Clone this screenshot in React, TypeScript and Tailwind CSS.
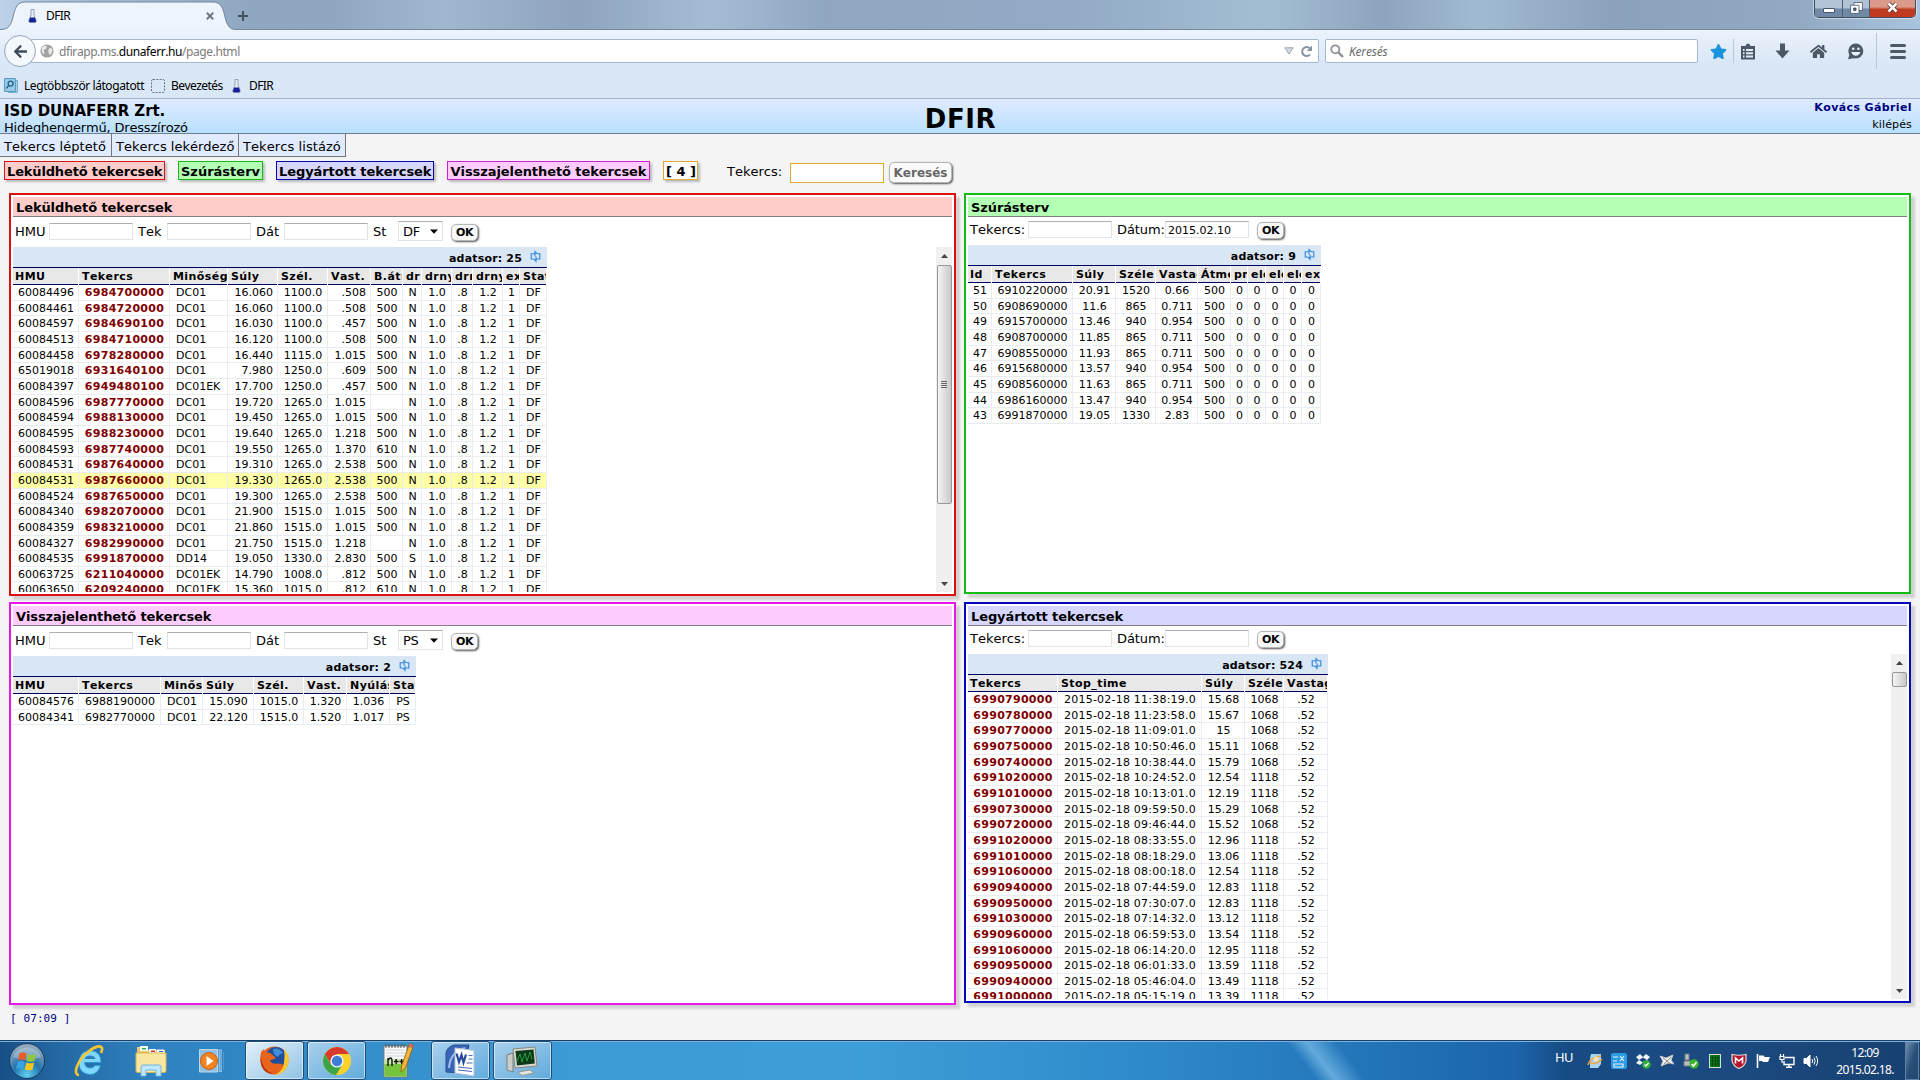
import type { ReactNode } from "react";
import { FaArrowLeft, FaStar, FaHome } from "react-icons/fa";

type Align = "left" | "right" | "center";
type Col = { t: string; w: string; a?: Align; bold?: boolean };

const hmuCols: Col[] = [
  { t: "HMU", w: "w-[66px]", a: "center" },
  { t: "Tekercs", w: "w-[91px]", a: "center", bold: true },
  { t: "Minőség", w: "w-[58px]", a: "left" },
  { t: "Súly", w: "w-[50px]", a: "right" },
  { t: "Szél.", w: "w-[50px]", a: "center" },
  { t: "Vast.", w: "w-[43px]", a: "right" },
  { t: "B.átm", w: "w-[32px]", a: "center" },
  { t: "dr", w: "w-[19px]", a: "center" },
  { t: "drny", w: "w-[30px]", a: "center" },
  { t: "drn", w: "w-[21px]", a: "center" },
  { t: "drny", w: "w-[30px]", a: "center" },
  { t: "ex", w: "w-[17px]", a: "center" },
  { t: "Stat", w: "w-[27px]", a: "center" },
];

const hmuRows = `60084496,6984700000,DC01,16.060,1100.0,.508,500,N
60084461,6984720000,DC01,16.060,1100.0,.508,500,N
60084597,6984690100,DC01,16.030,1100.0,.457,500,N
60084513,6984710000,DC01,16.120,1100.0,.508,500,N
60084458,6978280000,DC01,16.440,1115.0,1.015,500,N
65019018,6931640100,DC01,7.980,1250.0,.609,500,N
60084397,6949480100,DC01EK,17.700,1250.0,.457,500,N
60084596,6987770000,DC01,19.720,1265.0,1.015,,N
60084594,6988130000,DC01,19.450,1265.0,1.015,500,N
60084595,6988230000,DC01,19.640,1265.0,1.218,500,N
60084593,6987740000,DC01,19.550,1265.0,1.370,610,N
60084531,6987640000,DC01,19.310,1265.0,2.538,500,N
60084531,6987660000,DC01,19.330,1265.0,2.538,500,N
60084524,6987650000,DC01,19.300,1265.0,2.538,500,N
60084340,6982070000,DC01,21.900,1515.0,1.015,500,N
60084359,6983210000,DC01,21.860,1515.0,1.015,500,N
60084327,6982990000,DC01,21.750,1515.0,1.218,,N
60084535,6991870000,DD14,19.050,1330.0,2.830,500,S
60063725,6211040000,DC01EK,14.790,1008.0,.812,500,N
60063650,6209240000,DC01EK,15.360,1015.0,.812,610,N`
  .split("\n")
  .map((r) => [...r.split(","), "1.0", ".8", "1.2", "1", "DF"]);

const backCols: Col[] = [
  { t: "HMU", w: "w-[66px]" },
  { t: "Tekercs", w: "w-[82px]" },
  { t: "Minőség", w: "w-[42px]" },
  { t: "Súly", w: "w-[51px]" },
  { t: "Szél.", w: "w-[50px]" },
  { t: "Vast.", w: "w-[43px]" },
  { t: "Nyúlás", w: "w-[43px]" },
  { t: "Stat", w: "w-[26px]" },
];
const backRows = [
  ["60084576", "6988190000", "DC01", "15.090", "1015.0", "1.320", "1.036", "PS"],
  ["60084341", "6982770000", "DC01", "22.120", "1515.0", "1.520", "1.017", "PS"],
];

const planCols: Col[] = [
  { t: "Id", w: "w-[24px]" },
  { t: "Tekercs", w: "w-[81px]" },
  { t: "Súly", w: "w-[43px]" },
  { t: "Széle", w: "w-[40px]" },
  { t: "Vastag", w: "w-[42px]" },
  { t: "Átmé", w: "w-[33px]" },
  { t: "pr", w: "w-[17px]" },
  { t: "elő", w: "w-[18px]" },
  { t: "elő", w: "w-[18px]" },
  { t: "elő", w: "w-[18px]" },
  { t: "ex", w: "w-[19px]" },
];
const planRows = `51,6910220000,20.91,1520,0.66
50,6908690000,11.6,865,0.711
49,6915700000,13.46,940,0.954
48,6908700000,11.85,865,0.711
47,6908550000,11.93,865,0.711
46,6915680000,13.57,940,0.954
45,6908560000,11.63,865,0.711
44,6986160000,13.47,940,0.954
43,6991870000,19.05,1330,2.83`
  .split("\n")
  .map((r) => [...r.split(","), "500", "0", "0", "0", "0", "0"]);

const doneCols: Col[] = [
  { t: "Tekercs", w: "w-[90px]", bold: true },
  { t: "Stop_time", w: "w-[144px]" },
  { t: "Súly", w: "w-[43px]" },
  { t: "Széle", w: "w-[39px]" },
  { t: "Vastag", w: "w-[44px]" },
];
const doneRows = `6990790000,11:38:19,15.68,1068
6990780000,11:23:58,15.67,1068
6990770000,11:09:01,15,1068
6990750000,10:50:46,15.11,1068
6990740000,10:38:44,15.79,1068
6991020000,10:24:52,12.54,1118
6991010000,10:13:01,12.19,1118
6990730000,09:59:50,15.29,1068
6990720000,09:46:44,15.52,1068
6991020000,08:33:55,12.96,1118
6991010000,08:18:29,13.06,1118
6991060000,08:00:18,12.54,1118
6990940000,07:44:59,12.83,1118
6990950000,07:30:07,12.83,1118
6991030000,07:14:32,13.12,1118
6990960000,06:59:53,13.54,1118
6991060000,06:14:20,12.95,1118
6990950000,06:01:33,13.59,1118
6990940000,05:46:04,13.49,1118
6991000000,05:15:19,13.39,1118`
  .split("\n")
  .map((r) => {
    const [coil, time, weight, width] = r.split(",");
    return [coil, `2015-02-18 ${time}.0`, weight, width, ".52"];
  });

const alignClass: Record<Align, string> = {
  left: "text-left pl-[6px]",
  right: "text-right pr-[4px]",
  center: "text-center pl-px",
};

function RefreshIcon() {
  return (
    <svg width="11" height="13" viewBox="0 0 11 13" fill="none" stroke="#2f86e0" strokeWidth="1.1">
      <path d="M3.500 9H1.200V3.800H5.500M5 0.800V6.500M5 2L7.500 3.800" />
      <path d="M7.500 3.800H9.800V9H5.500M6 6.500V12.200M6 10.800L3.500 9" />
    </svg>
  );
}

function DataTable({ cols, rows, count, selected }: { cols: Col[]; rows: string[][]; count: number; selected?: number }) {
  return (
    <div className="w-max shrink-0 text-[11px]">
      <div className="flex h-[21px] items-center justify-end gap-2 border-b border-[#000060] bg-[#d9e6f4] pr-[6px]">
        <span className="pt-[3px] font-bold tracking-[0.18px]">adatsor: {count}</span>
        <span className="-mt-[2px]">
          <RefreshIcon />
        </span>
      </div>
      <div className="flex h-[17px] bg-[#e8e8e8]">
        {cols.map((c, i) => (
          <div key={i} className={`h-[17px] border-r border-white ${c.w}`}>
            <div
              className={`h-[17px] overflow-hidden whitespace-nowrap border-b border-[#000060] font-bold leading-[17px] tracking-[0.42px] ${
                i === 0 ? "pl-[2px]" : "pl-[3px]"
              }`}
            >
              {c.t}
            </div>
          </div>
        ))}
      </div>
      {rows.map((r, ri) => (
        <div key={ri} className={`flex h-[15.66px] ${ri === selected ? "bg-[#ffffa8]" : ""}`}>
          {cols.map((c, i) => (
            <div
              key={i}
              className={`h-full whitespace-nowrap border-r border-b border-[#e9edf1] leading-[16px] ${c.w} ${alignClass[c.a ?? "center"]} ${
                c.bold ? "font-bold text-[#800000] tracking-[0.28px]" : r[i].length > 12 ? "tracking-[0.22px]" : ""
              }`}
            >
              {r[i]}
            </div>
          ))}
        </div>
      ))}
    </div>
  );
}

function Field({ value }: { value?: string }) {
  return <div className="h-[17px] w-[84px] border border-[#dfe3ea] border-t-[#abadb3] bg-white pl-[2px] text-[11px] leading-[17px]">{value}</div>;
}

function OkButton() {
  return (
    <div className="mt-[2px] ml-[8px] h-[17px] w-[27px] rounded-[5px] border border-[#b5b5b5] bg-[#f7f7f7] text-center text-[11px] font-bold leading-[16px] tracking-[-0.4px] shadow-[1px_1px_2px_#555]">
      OK
    </div>
  );
}

function CoilFilter({ status }: { status: string }) {
  return (
    <div className="flex h-[30px] items-center pl-[2px] pb-[2px]">
      <span className="w-[34px]">HMU</span>
      <Field />
      <span className="w-[34px] pl-[5px]">Tek</span>
      <Field />
      <span className="w-[33px] pl-[5px]">Dát</span>
      <Field />
      <span className="w-[30px] pl-[5px]">St</span>
      <div className="flex h-[20px] w-[45px] items-center justify-between border border-[#dfe3ea] border-t-[#abadb3] bg-white pr-[4px] pl-[4px] text-[13px] tracking-[-0.3px]">
        {status}
        <svg width="8" height="5" viewBox="0 0 8 5">
          <path d="M0 0.500H8L4 4.800Z" fill="#000" />
        </svg>
      </div>
      <OkButton />
    </div>
  );
}

function DateFilter({ date, pad }: { date?: string; pad: string }) {
  return (
    <div className={`flex h-[28px] items-center pl-[2px] ${pad}`}>
      <span className="w-[58px]">Tekercs:</span>
      <Field />
      <span className="w-[53px] pl-[5px] tracking-[-0.1px]">Dátum:</span>
      <Field value={date} />
      <OkButton />
    </div>
  );
}

function Scrollbar({ thumb, grip }: { thumb: string; grip?: boolean }) {
  return (
    <div className="flex w-[16px] flex-col items-center bg-[#f0f0f0]">
      <div className="flex h-[18px] items-center">
        <svg width="7" height="4" viewBox="0 0 7 4">
          <path d="M0 4L3.500 0 7 4Z" fill="#444" />
        </svg>
      </div>
      <div className={`flex w-[15px] items-center justify-center rounded-[2px] border border-[#979797] bg-gradient-to-r from-[#f5f5f5] to-[#c8c8cc] ${thumb}`}>
        {grip && (
          <div className="flex flex-col gap-px">
            <i className="h-px w-[6px] bg-[#666]" />
            <i className="h-px w-[6px] bg-[#666]" />
            <i className="h-px w-[6px] bg-[#666]" />
            <i className="h-px w-[6px] bg-[#666]" />
          </div>
        )}
      </div>
      <div className="mt-auto flex h-[17px] items-center">
        <svg width="7" height="4" viewBox="0 0 7 4">
          <path d="M0 0L3.500 4 7 0Z" fill="#444" />
        </svg>
      </div>
    </div>
  );
}

function Panel({ title, frame, head, filter, children, scroll }: { title: string; frame: string; head: string; filter: ReactNode; children: ReactNode; scroll?: ReactNode }) {
  return (
    <section className={`flex w-[947px] flex-col border-2 bg-white p-[2px] shadow-[4px_4px_2px_rgba(0,0,0,0.14)] ${frame}`}>
      <h2 className={`h-[20px] shrink-0 border-b border-[#808080] pl-[3px] text-[13px] font-bold leading-[21px] tracking-[-0.1px] ${head}`}>{title}</h2>
      {filter}
      <div className="flex min-h-0 flex-1 justify-between overflow-hidden">
        {children}
        {scroll}
      </div>
    </section>
  );
}

function Flask() {
  return (
    <svg className="shrink-0" width="9" height="14" viewBox="0 0 9 14">
      <path d="M3 0.500H6V6L8.300 11.500Q8.600 13.500 7 13.500H2Q0.400 13.500 0.700 11.500L3 6Z" fill="#e8eef6" stroke="#8c99ad" strokeWidth="0.9" />
      <path d="M2.200 8.500H6.800L8 11.800Q8.200 13.200 7 13.200H2Q0.800 13.200 1 11.800Z" fill="#16209c" />
    </svg>
  );
}

function BrowserChrome() {
  return (
    <div className="h-[99px] shrink-0 border-b border-[#a3b2c4] bg-gradient-to-b from-[#ebf3fc] from-30% to-[#d9e7f6] to-65% font-['Noto_Sans',sans-serif] text-[12px]">
      <div className="flex h-[30px] justify-between border-b border-[#77889b] bg-[linear-gradient(90deg,#bcd3ea_0%,#a9bfd8_3%,#90a7c2_13%,#8fa6c1_17%,#9fb8cf_23%,#8fa4be_30%,#a4bdd4_37%,#90a6c1_43%,#93abc6_56%,#a3bed3_66%,#8ea4be_72%,#a0bbd1_77%,#8ba1bc_84%,#93aac3_94%,#a9c4e0_100%)]">
        <div className="flex">
          <div className="relative h-[30px] w-[236px]">
            <svg className="absolute inset-0" width="236" height="30" viewBox="0 0 236 30">
              <path d="M0 29.500C9 29.500 11 25 13 17C15 8 17 2 25 2H213C221 2 223 8 225 17C227 25 229 29.500 236 29.500V30H0Z" fill="#edf4fc" />
              <path d="M0 29.500C9 29.500 11 25 13 17C15 8 17 2 25 2H213C221 2 223 8 225 17C227 25 229 29.500 236 29.500" fill="none" stroke="#74869b" />
            </svg>
            <div className="relative flex h-[32px] items-center pl-[28px]">
              <Flask />
              <span className="pl-[9px] tracking-[-0.6px]">DFIR</span>
              <svg className="mr-[22px] ml-auto" width="8" height="8" viewBox="0 0 8 8" stroke="#6d7884" strokeWidth="2">
                <path d="M0.800 0.800L7.200 7.200M7.200 0.800L0.800 7.200" />
              </svg>
            </div>
          </div>
          <svg className="mt-[11px] ml-[2px]" width="10" height="10" viewBox="0 0 10 10" stroke="#45525f" strokeWidth="2">
            <path d="M5 0V10M0 5H10" />
          </svg>
        </div>
        <div className="mr-[4px] flex h-[18px] w-[102px] overflow-hidden rounded-b-[5px] border border-t-0 border-[#3f4e61] shadow-[0_0_1px_1px_rgba(255,255,255,0.5)]">
          <div className="flex w-[28px] items-end justify-center border-r border-[#4e5f73] bg-gradient-to-b from-[#b3c3d6] from-45% to-[#7089a6] to-55% pb-[4px]">
            <div className="h-[5px] w-[12px] rounded-[1px] border border-[#44546a] bg-white" />
          </div>
          <div className="flex w-[27px] items-center justify-center border-r border-[#4e5f73] bg-gradient-to-b from-[#b3c3d6] from-45% to-[#7089a6] to-55% pb-[2px]">
            <svg width="13" height="12" viewBox="0 0 13 12" fill="#fff" stroke="#44546a" strokeWidth="0.8">
              <path d="M4 0.500H12.400V8.500H4Z" />
              <path d="M0.600 3.200H9V11.400H0.600Z" />
              <path d="M3.600 6H6V8.600H3.600Z" fill="#44546a" />
            </svg>
          </div>
          <div className="flex flex-1 items-center justify-center bg-gradient-to-b from-[#dc9a8b] from-40% to-[#bf3a20] to-55% pb-[2px]">
            <svg width="13" height="11" viewBox="0 0 13 11" fill="none">
              <path d="M2.500 1.500L10.500 9.500M10.500 1.500L2.500 9.500" stroke="#5a3030" strokeWidth="4" />
              <path d="M2.500 1.500L10.500 9.500M10.500 1.500L2.500 9.500" stroke="#fff" strokeWidth="2.5" />
            </svg>
          </div>
        </div>
      </div>

      <div className="flex h-[42px] items-center">
        <div className="z-10 ml-[4px] flex size-[32px] items-center justify-center rounded-full border border-[#97a6b8] bg-[#f3f8fd] text-[#3d4a58]">
          <FaArrowLeft size={15} />
        </div>
        <div className="-ml-[5px] flex h-[24px] w-[1288px] items-center rounded-r-[2px] border border-[#a5b8cd] bg-white pl-[8px]">
          <svg width="14" height="14" viewBox="0 0 14 14">
            <circle cx="7" cy="7" r="6.600" fill="#a2a2a2" />
            <path d="M2 3.500Q4 1 7 2L6 5 3.500 6 4.500 8.500 3.500 10.500Q1 8 2 3.500ZM8.500 5L11 3.500 12.500 6 11.500 9.500 9.500 11 8.500 8.500Z" fill="#e9e9e9" />
          </svg>
          <span className="pt-[2px] pl-[5px] tracking-[-0.42px] text-[#7b7b7b]">
            dfirapp.ms.<span className="text-black">dunaferr.hu</span>/page.html
          </span>
          <svg className="mr-[6px] ml-auto" width="10" height="8" viewBox="0 0 10 8" fill="#d6dbe1" stroke="#9aa5b0">
            <path d="M0.800 0.800H9.200L5 7Z" />
          </svg>
          <svg className="mr-[5px]" width="13" height="13" viewBox="0 0 13 13" fill="none" stroke="#8793a0" strokeWidth="2">
            <path d="M10 9.600A4.500 4.500 0 1 1 10 3.600" />
            <path d="M12 0.500V6H6.800Z" fill="#8793a0" stroke="none" />
          </svg>
        </div>
        <div className="ml-[6px] flex h-[24px] w-[373px] items-center rounded-[2px] border border-[#a5b8cd] bg-white pl-[4px]">
          <svg width="14" height="14" viewBox="0 0 14 14" fill="none" stroke="#8b929a">
            <circle cx="5.300" cy="5.300" r="4" strokeWidth="1.800" />
            <path d="M8.300 8.300L13 13" strokeWidth="2.400" />
          </svg>
          <span className="pt-[2px] pl-[5px] italic tracking-[-0.2px] text-[#6b6b6b]">Keresés</span>
        </div>
        <div className="ml-[12px] flex flex-1 items-center text-[#4d5967]">
          <FaStar size={17} color="#1b93dd" />
          <i className="mx-[6px] h-[24px] w-px bg-[#b9c7d6]" />
          <svg width="16" height="17" viewBox="0 0 16 17" fill="currentColor">
            <path fillRule="evenodd" d="M1 3H5.500Q6 0.500 8 0.500T10.500 3H15V16.500H1ZM3 6V8H4.500V6ZM6 6V8H13V6ZM3 9.300V11.200H4.500V9.300ZM6 9.300V11.200H13V9.300ZM3 12.600V14.500H4.500V12.600ZM6 12.600V14.500H13V12.600Z" />
          </svg>
          <svg className="ml-[19px]" width="15" height="16" viewBox="0 0 15 16" fill="currentColor">
            <path d="M5 0.500H10V7.500H14.500L7.500 15.500 0.500 7.500H5Z" />
          </svg>
          <FaHome className="ml-[20px]" size={17} />
          <svg className="ml-[20px]" width="17" height="17" viewBox="0 0 17 17">
            <circle cx="8.800" cy="8" r="7.500" fill="currentColor" />
            <path d="M1 16.200L3 10 8 15Z" fill="currentColor" />
            <circle cx="6.200" cy="5.800" r="1.300" fill="#e6eff9" />
            <circle cx="11.400" cy="5.800" r="1.300" fill="#e6eff9" />
            <path d="M4.200 9H13.400Q12 12.800 8.800 12.800T4.200 9Z" fill="#e6eff9" />
          </svg>
          <i className="ml-[12px] h-[36px] w-px bg-[#b9c7d6]" />
          <div className="ml-[13px] flex flex-col gap-[3px]">
            <i className="h-[3px] w-[16px] rounded-sm bg-[#4d5967]" />
            <i className="h-[3px] w-[16px] rounded-sm bg-[#4d5967]" />
            <i className="h-[3px] w-[16px] rounded-sm bg-[#4d5967]" />
          </div>
        </div>
      </div>

      <div className="flex h-[27px] items-center pl-[4px]">
        <svg className="shrink-0" width="14" height="15" viewBox="0 0 14 15">
          <path d="M10 2.500H13.300V14.300H4" fill="#bfe0f2" stroke="#5aa2c8" />
          <path d="M0.600 0.600H11.400V13.400H0.600Z" fill="#9ccbe6" stroke="#4d97c0" />
          <circle cx="6.600" cy="5.600" r="2.500" fill="none" stroke="#1c5f8c" strokeWidth="1.300" />
          <path d="M4.800 7.400L2.400 10.400" stroke="#1c5f8c" strokeWidth="1.500" />
        </svg>
        <span className="w-[127px] pl-[6px] whitespace-nowrap tracking-[-0.42px]">Legtöbbször látogatott</span>
        <svg className="ml-[6px]" width="14" height="14" viewBox="0 0 14 14">
          <rect x="0.500" y="0.500" width="13" height="13" rx="1.500" fill="none" stroke="#66727f" strokeDasharray="2 1.300" />
        </svg>
        <span className="w-[67px] pl-[6px] whitespace-nowrap tracking-[-0.55px]">Bevezetés</span>
        <Flask />
        <span className="pl-[8px] tracking-[-0.6px]">DFIR</span>
      </div>
    </div>
  );
}

function NavTag({ children, skin }: { children: ReactNode; skin: string }) {
  return (
    <span className={`h-[19px] border px-[2px] text-center font-bold leading-[19px] whitespace-nowrap shadow-[2px_2px_2px_#bbb] ${skin}`}>{children}</span>
  );
}

function TaskButton({ children, active }: { children: ReactNode; active?: boolean }) {
  return (
    <div
      className={`flex h-[39px] w-[59px] items-center justify-center rounded-[3px] border border-[#1f4f78] shadow-[inset_0_0_0_1px_rgba(255,255,255,0.55)] ${
        active ? "bg-gradient-to-br from-[#e4f0f9] to-[#8fc3e6]" : "bg-gradient-to-br from-[#a9d0ec] to-[#5fabdd]"
      }`}
    >
      {children}
    </div>
  );
}

function Taskbar() {
  return (
    <div className="flex h-[40px] shrink-0 items-center border-t border-[#17406a] bg-[linear-gradient(52deg,transparent_67.500%,rgba(150,210,245,0.55)_68.500%,transparent_70%),linear-gradient(90deg,#184f87_0%,#2468a3_3%,#2f82bf_8%,#3088c6_14%,#3c9bd4_30%,#3d9dd6_45%,#3391d0_55%,#2a82c5_64%,#2273b8_72%,#1c64ab_79%,#174b83_81.500%,#1c4a80_90%,#17406f_100%)] shadow-[inset_0_1px_0_#7fb2d8] font-['Noto_Sans',sans-serif] text-white">
      <svg className="ml-[8px]" width="38" height="38" viewBox="0 0 38 38">
        <defs>
          <radialGradient id="orb" cx="50%" cy="90%" r="80%">
            <stop offset="0" stopColor="#5fd0f2" />
            <stop offset="0.5" stopColor="#2474ae" />
            <stop offset="1" stopColor="#8fa8bd" />
          </radialGradient>
        </defs>
        <circle cx="19" cy="19" r="17.500" fill="url(#orb)" stroke="#16395b" />
        <path d="M5 15A14.500 13 0 0 1 33 15Q19 21 5 15Z" fill="#fff" opacity="0.25" />
        <path d="M11.500 11.500Q15 9.500 18.500 11.500L17 18.500Q13.500 16.500 10 18.300Z" fill="#ef5a23" />
        <path d="M20 12Q24 13.800 28 12L26.500 19Q22.500 20.500 18.700 18.900Z" fill="#8fc93a" />
        <path d="M9.600 20Q13 18.200 16.700 20L15 27Q11.500 25.200 8 27Z" fill="#38a4e8" />
        <path d="M18.300 20.500Q22 22.200 26.200 20.500L24.500 27.500Q20.500 29.200 16.800 27.500Z" fill="#fcc81d" />
      </svg>
      <svg className="ml-[27px]" width="32" height="32" viewBox="0 0 32 32" fill="none">
        <path d="M28 17.500H11.500Q12 23 17.500 23Q20.500 23 22 20.500H27.500Q25 29.500 17 29.500Q6 29 6 17.500Q6.500 6 17 5.500Q28 6 28 17.500Z" fill="#7fd8fb" stroke="#2a9ad8" />
        <path d="M11.800 14H22.500Q21.800 10.500 17 10.500T11.800 14Z" fill="#2c7fb9" />
        <path d="M6 30C-1 30 5 14 15 7C22 1 28 0 29 3Q29.500 5 28 8" stroke="#f7c62f" strokeWidth="2.600" />
      </svg>
      <svg className="ml-[29px]" width="34" height="32" viewBox="0 0 34 32">
        <path d="M3 5V2H12L14 5H31V27H3Z" fill="#e8c766" />
        <path d="M6 1H14V6H6ZM15 4H22V8H15ZM23 4.500H30V8H23Z" fill="#f6fbff" />
        <path d="M8 3H12V4.500H8Z" fill="#3ba55d" />
        <path d="M17 5.500H21V7H17Z" fill="#c33" />
        <path d="M25 6H29V7H25Z" fill="#36c" />
        <path d="M2 8H32V26Q32 27.500 30 27.500H4Q2 27.500 2 26Z" fill="#f9e6a0" stroke="#d9b457" />
        <path d="M7 31V22Q7 20 9 20H25Q27 20 27 22V31H22V25H12V31Z" fill="#bfe6fa" stroke="#6db7e2" />
      </svg>
      <svg className="ml-[31px]" width="26" height="24" viewBox="0 0 26 24">
        <path d="M4 0.500H23V23H4Z" fill="#a4cbea" opacity="0.8" />
        <path d="M19.500 1V23M22 2V22M24.500 3V21" stroke="#4f9bd0" />
        <path d="M0.500 0.500H18.500V23H0.500Z" fill="#8ec1e6" stroke="#b9daf0" />
        <circle cx="10" cy="12" r="8.500" fill="#f08322" stroke="#c85e10" />
        <path d="M7.500 7L14.500 12 7.500 17Z" fill="#fff" />
      </svg>
      <div className="ml-[20px] flex items-center">
        <TaskButton active>
          <svg width="31" height="31" viewBox="0 0 31 31">
            <circle cx="15.500" cy="15.500" r="14" fill="#e6601f" />
            <circle cx="17" cy="12.500" r="10.500" fill="#1f4f9a" />
            <path d="M14 4Q20 2 24 8Q20 9 19 12Q14 10 14 4Z" fill="#3f8fd8" />
            <path d="M25 4Q31 10 29.500 18Q27 29 15.500 30Q24 26 25 18Q26 10 25 4Z" fill="#f9c830" />
            <path d="M2 7L5 4 6 8Q9 7 12 8.500L17 13Q14 15 11 15Q13 20 19 18.500Q23 18 24 20Q22 27 14 28.500Q3 27 1.500 17Q1 11 2 7Z" fill="#e8641c" />
            <path d="M2 12Q3 25 14 29Q6 29 2.500 21Q1 16 2 12Z" fill="#b83512" />
          </svg>
        </TaskButton>
        <div className="ml-[3px]">
          <TaskButton>
            <svg width="30" height="30" viewBox="0 0 30 30">
              <circle cx="15" cy="15" r="14" fill="#fbd22c" />
              <path d="M15 8H27.100A14 14 0 0 0 2.900 8L9 18Z" fill="#d9382c" />
              <path d="M2.900 8A14 14 0 0 0 14 29L20.500 18.500 9 18.500Z" fill="#3ba548" />
              <circle cx="15" cy="15" r="6.600" fill="#f2f6fa" />
              <circle cx="15" cy="15" r="5.200" fill="#3d7fd6" />
            </svg>
          </TaskButton>
        </div>
        <svg className="ml-[16px]" width="34" height="37" viewBox="0 0 34 37">
          <path d="M2 4H25V35H2Z" fill="#fbfbfb" stroke="#777" />
          <path d="M2.500 20H24.500V34.500H2.500Z" fill="#76c43c" />
          <path d="M2.500 17H24.500V22H2.500Z" fill="#c7e8a8" />
          <path d="M4 8H23M4 11H23M4 14H23" stroke="#c8d2d8" />
          <path d="M4 2V6M7 2V6M10 2V6M13 2V6M16 2V6M19 2V6M22 2V6" stroke="#555" />
          <path d="M6 24V16M6 18Q9.500 14 10 18V24M12 19.500H16.500M14.200 17V22M17.500 19.500H22M19.700 17V22" stroke="#111" strokeWidth="1.400" fill="none" />
          <path d="M27.500 1.500L31.500 3.500 23.500 26 19 30 19.500 24Z" fill="#f1b53a" stroke="#8a5a14" strokeWidth="0.800" />
          <path d="M27.500 1.500L31.500 3.500 30.500 6.500 26.500 4.500Z" fill="#d66a5a" />
        </svg>
        <div className="ml-[15px]">
          <TaskButton>
            <svg width="32" height="33" viewBox="0 0 32 33">
              <path d="M1 28V9Q2 3 9 1H24L18 29Z" fill="#3866b4" stroke="#2a4d94" />
              <path d="M4 24Q5 8 20 4" stroke="#9fc0ee" strokeWidth="2" fill="none" />
              <path d="M10 4L29 6.500V32L10 29Z" fill="#fdfdfd" stroke="#b8c4d6" />
              <path d="M11.500 9.500L14 18 16.500 11 18.500 18.500 21 10.500" stroke="#24499a" strokeWidth="2.200" fill="none" />
              <path d="M23.500 11.500H27.500M23.500 15H27.500M21.500 19H27.500M13 23L27 24.500M13 26L27 27.500" stroke="#4a6fb4" strokeWidth="1.200" />
            </svg>
          </TaskButton>
        </div>
        <div className="ml-[3px]">
          <TaskButton>
            <svg width="33" height="30" viewBox="0 0 33 30">
              <path d="M1 9L7 7V26L1 24Z" fill="#c9ccc8" stroke="#7d827c" />
              <path d="M7 3L29 1 31 20 9 22Z" fill="#d8d9d2" stroke="#85887f" />
              <path d="M9.500 5L27.500 3.500 28.800 17.500 11 19.500Z" fill="#0d3b1a" />
              <path d="M11 15L14 8 16 16 19 7 21 15 24 6 26 13" stroke="#249a42" fill="none" />
              <path d="M12 26L24 24 28 27 16 29.500Z" fill="#e6e6e0" stroke="#92958c" />
            </svg>
          </TaskButton>
        </div>
      </div>

      <div className="ml-auto flex h-full items-center">
        <span className="w-[32px] self-start pt-[6px] text-[13px] leading-[20px] tracking-[-0.6px]">HU</span>
        <div className="mr-[15px] flex gap-[8px]">
          <svg width="16" height="16" viewBox="0 0 16 16">
            <path d="M4 1H14V11L11 15H3V5Z" fill="#a9d4ee" />
            <path d="M1 12Q3 4 14 3M3 9Q8 13 15 6" stroke="#f0a040" strokeWidth="1.600" fill="none" />
            <circle cx="9" cy="6" r="2.500" fill="#f6e3b0" />
          </svg>
          <svg width="16" height="16" viewBox="0 0 16 16">
            <rect width="16" height="16" rx="2" fill="#2b9be4" />
            <path d="M2 4H7M2 8H6M9 3L13 8M13 3L9 8M3 11H12V14H3Z" stroke="#e9f6ff" fill="none" strokeWidth="1.200" />
          </svg>
          <svg width="16" height="16" viewBox="0 0 16 16">
            <path d="M1 4L5 1 8 4 11 1 15 4 12 7 15 10 11 12 8 9.500 5 12 1 10 4 7ZM4 7L8 9.500 12 7 8 4.500Z" fill="#f0f4f8" fillRule="evenodd" />
            <circle cx="11.500" cy="11.500" r="4.300" fill="#2fae3c" />
            <path d="M9.500 11.500L11 13 13.600 10" stroke="#fff" strokeWidth="1.300" fill="none" />
          </svg>
          <svg width="16" height="16" viewBox="0 0 16 16">
            <path d="M1 3L7 5 14 2 12 7 15 11 9 10 2 13 4 8Z" fill="#f0f0ee" stroke="#c4c4c4" />
            <path d="M4 5L12 11M12 4L5 11" stroke="#777" strokeWidth="0.800" />
          </svg>
          <svg width="16" height="16" viewBox="0 0 16 16">
            <path d="M2 1H6V7H2ZM1 8H9V13H1Z" fill="#b9bfc6" stroke="#6f7882" />
            <circle cx="11" cy="11" r="4.700" fill="#38b526" />
            <path d="M8.500 11L10.500 13 13.500 9" stroke="#fff" strokeWidth="1.500" fill="none" />
          </svg>
          <svg width="16" height="16" viewBox="0 0 16 16">
            <rect x="2.500" y="1.500" width="11" height="13" fill="#0d7a1c" stroke="#cfe3cf" />
            <path d="M5.500 2V14M8.500 2V14M11 2V14M3 5H13M3 8H13M3 11H13" stroke="#06400e" strokeWidth="0.800" />
          </svg>
          <svg width="16" height="16" viewBox="0 0 16 16">
            <path d="M1 1.500Q8 3 15 1.500V8Q14 13 8 15.500Q2 13 1 8Z" fill="#b3162b" stroke="#e6dede" strokeWidth="1.200" />
            <path d="M4.500 10.500V5L8 8 11.500 5V10.500" stroke="#fff" strokeWidth="1.600" fill="none" />
          </svg>
          <svg width="16" height="16" viewBox="0 0 16 16">
            <path d="M2.500 1V15" stroke="#fff" strokeWidth="1.600" />
            <path d="M4 2.500H8.500L9.500 4H15L13 9H8L7 8H4Z" fill="#fff" />
          </svg>
          <svg width="16" height="16" viewBox="0 0 16 16" fill="none" stroke="#fff" strokeWidth="1.400">
            <path d="M6 4.500H15V11.500H5V8M10 11.500V14M7 14.200H13" />
            <path d="M1.500 1V3.500M4.500 1V3.500M1 3.500H5V6.500H1ZM3 6.500V10" strokeWidth="1.200" />
          </svg>
          <svg width="16" height="16" viewBox="0 0 16 16" fill="none" stroke="#fff">
            <path d="M1 5.500H3.500L7 2V14L3.500 10.500H1Z" fill="#fff" />
            <path d="M9 6Q10.300 8 9 10M11 4.500Q13.300 8 11 11.500M13 3Q16.300 8 13 13" />
          </svg>
        </div>
        <div className="w-[62px] text-center text-[12px] leading-[17px] tracking-[-0.65px] whitespace-nowrap">
          12:09
          <br />
          2015.02.18.
        </div>
        <div className="mr-px ml-[9px] h-[38px] w-[14px] border border-[#5d83a8] bg-gradient-to-br from-[#6f8fae] via-[#2a4f78] to-[#22466e]" />
      </div>
    </div>
  );
}

export default function App() {
  return (
    <div className="flex h-[1080px] w-[1920px] flex-col overflow-hidden bg-[#f4f4f4] font-['DejaVu_Sans',sans-serif] text-[13px] leading-none text-black [font-kerning:none]">
      <BrowserChrome />
      <header className="flex h-[35px] shrink-0 items-center justify-between border-b border-[#708090] bg-gradient-to-b from-[#dfebff] to-[#b8e0ff] pr-[8px] pl-[4px]">
        <div className="w-[400px] pt-[4px]">
          <div className="text-[15px] font-bold leading-[18px] tracking-[-0.1px]">ISD DUNAFERR Zrt.</div>
          <div className="leading-[15px] tracking-[-0.18px]">Hideghengermű, Dresszírozó</div>
        </div>
        <h1 className="pt-[5px] pl-[5px] text-[26px] font-bold tracking-[0.6px]">DFIR</h1>
        <div className="w-[400px] text-right text-[11px] leading-[17px]">
          <div className="font-bold tracking-[0.38px] text-[#000080]">Kovács Gábriel</div>
          <div className="tracking-[0.15px]">kilépés</div>
        </div>
      </header>
      <nav className="flex h-[23px] shrink-0 leading-[25px] whitespace-nowrap">
        <div className="w-[112px] border-r border-b border-[#777] bg-[#e0ebff] pl-[4px] tracking-[0.08px]">Tekercs léptető</div>
        <div className="w-[127px] border-r border-b border-[#777] bg-[#e0ebff] pl-[4px]">Tekercs lekérdező</div>
        <div className="w-[107px] border-r border-b border-[#777] bg-[#e0ebff] pl-[4px] tracking-[0.08px]">Tekercs listázó</div>
      </nav>
      <div className="flex h-[36px] shrink-0 items-start pt-[4px] pl-[4px]">
        <NavTag skin="w-[161px] border-[#d01818] bg-[#ffcccc] tracking-[-0.15px]">Leküldhető tekercsek</NavTag>
        <NavTag skin="ml-[13px] w-[85px] border-[#18b818] bg-[#b3ffb3]">Szúrásterv</NavTag>
        <NavTag skin="ml-[13px] w-[158px] border-[#0808a8] bg-[#d6d6ff] tracking-[-0.08px]">Legyártott tekercsek</NavTag>
        <NavTag skin="ml-[13px] w-[203px] border-[#d020d0] bg-[#ffccff] tracking-[-0.08px]">Visszajelenthető tekercsek</NavTag>
        <NavTag skin="ml-[13px] w-[35px] border-[#e0a830] bg-white">[ 4 ]</NavTag>
        <span className="ml-[29px] w-[63px] pt-[4px]">Tekercs:</span>
        <div className="mt-[2px] h-[20px] w-[94px] border border-[#e0a830] bg-white" />
        <div className="mt-px ml-[5px] h-[21px] w-[63px] rounded-[5px] border border-[#b5b5b5] bg-[#fafafa] text-center text-[12px] font-bold leading-[21px] text-[#666] shadow-[1px_1px_2px_#555]">
          Keresés
        </div>
      </div>

      <main className="flex shrink-0 gap-[8px] pl-[9px]">
        <div className="flex flex-col gap-[6px]">
          <Panel
            title="Leküldhető tekercsek"
            frame="h-[403px] border-[#dc1010]"
            head="bg-[#ffcccc]"
            filter={<CoilFilter status="DF" />}
            scroll={<Scrollbar thumb="h-[239px]" grip />}
          >
            <DataTable cols={hmuCols} rows={hmuRows} count={25} selected={12} />
          </Panel>
          <Panel title="Visszajelenthető tekercsek" frame="h-[403px] border-[#e816e8]" head="bg-[#ffccff]" filter={<CoilFilter status="PS" />}>
            <DataTable cols={backCols} rows={backRows} count={2} />
          </Panel>
        </div>
        <div className="flex flex-col gap-[8px]">
          <Panel title="Szúrásterv" frame="h-[401px] border-[#12bc12]" head="bg-[#b3ffb3]" filter={<DateFilter date="2015.02.10" pad="pb-[3px]" />}>
            <DataTable cols={planCols} rows={planRows} count={9} />
          </Panel>
          <Panel
            title="Legyártott tekercsek"
            frame="h-[401px] border-[#0606bc]"
            head="bg-[#d6d6ff]"
            filter={<DateFilter pad="pb-[3px]" />}
            scroll={<Scrollbar thumb="h-[15px]" />}
          >
            <DataTable cols={doneCols} rows={doneRows} count={524} />
          </Panel>
        </div>
      </main>

      <footer className="flex-1 pt-[8px] pl-[10px] font-['DejaVu_Sans_Mono',monospace] text-[11px] tracking-[0.1px] text-[#000080]">[ 07:09 ]</footer>
      <Taskbar />
    </div>
  );
}
